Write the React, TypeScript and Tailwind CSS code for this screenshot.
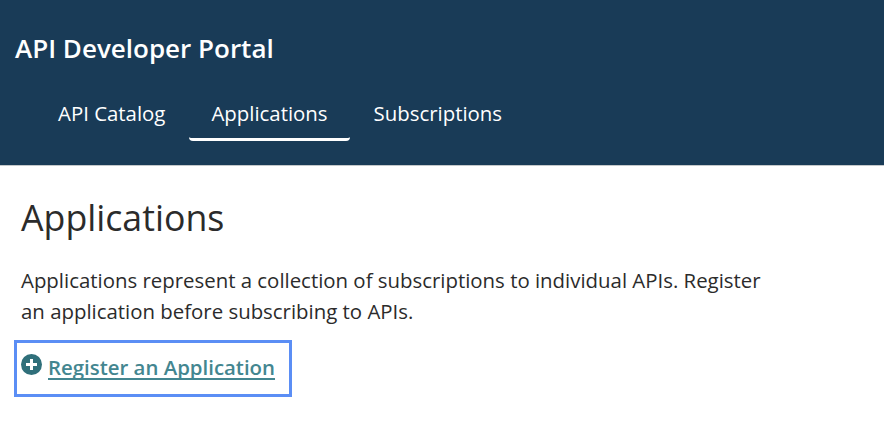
const App = () => {
  return (
    <div className="h-[426px] w-[884px] overflow-hidden bg-white font-['Open_Sans',sans-serif] text-[#2b2b2b]">
      {/* Header */}
      <header className="h-[166px] border-b border-[#c4c8ca] bg-[#193b57] text-white">
        <div className="pl-[15px] pt-[30px] text-[26px] font-semibold leading-[36px]">
          API Developer Portal
        </div>
        <nav className="ml-[36px] mt-[33px] flex gap-[2px]">
          <a className="px-[22px] pb-[11px] text-[20.4px] leading-[28px]">API Catalog</a>
          <a className="rounded-b-sm border-b-[3px] border-white px-[22px] pb-[11px] text-[20.4px] leading-[28px]">
            Applications
          </a>
          <a className="px-[22px] pb-[11px] text-[20.4px] leading-[28px]">Subscriptions</a>
        </nav>
      </header>

      {/* Content */}
      <main className="px-[21px] pt-[28px]">
        <h1 className="text-[35.7px] leading-[46px]">Applications</h1>
        <p className="mt-[25px] w-[760px] text-[20.4px] leading-[31px]">
          Applications represent a collection of subscriptions to individual APIs. Register an application before subscribing to APIs.
        </p>
        <a className="-ml-[7px] mt-[13px] flex h-[57px] w-[278px] items-center gap-[6px] border-[3px] border-[#5b8ef5] pb-[2px] pl-[4px] text-[20.4px] font-semibold text-[#438690] underline decoration-2 underline-offset-[3px] [text-decoration-skip-ink:none]">
          <svg width="21" height="21" viewBox="0 0 21 21" className="mb-[7px] shrink-0">
            <circle cx="10.5" cy="10.5" r="10.5" fill="#2f6f7a" />
            <path d="M10.5 5v11M5 10.5h11" stroke="#fff" strokeWidth="3" />
          </svg>
          Register an Application
        </a>
      </main>
    </div>
  );
};

export default App;
